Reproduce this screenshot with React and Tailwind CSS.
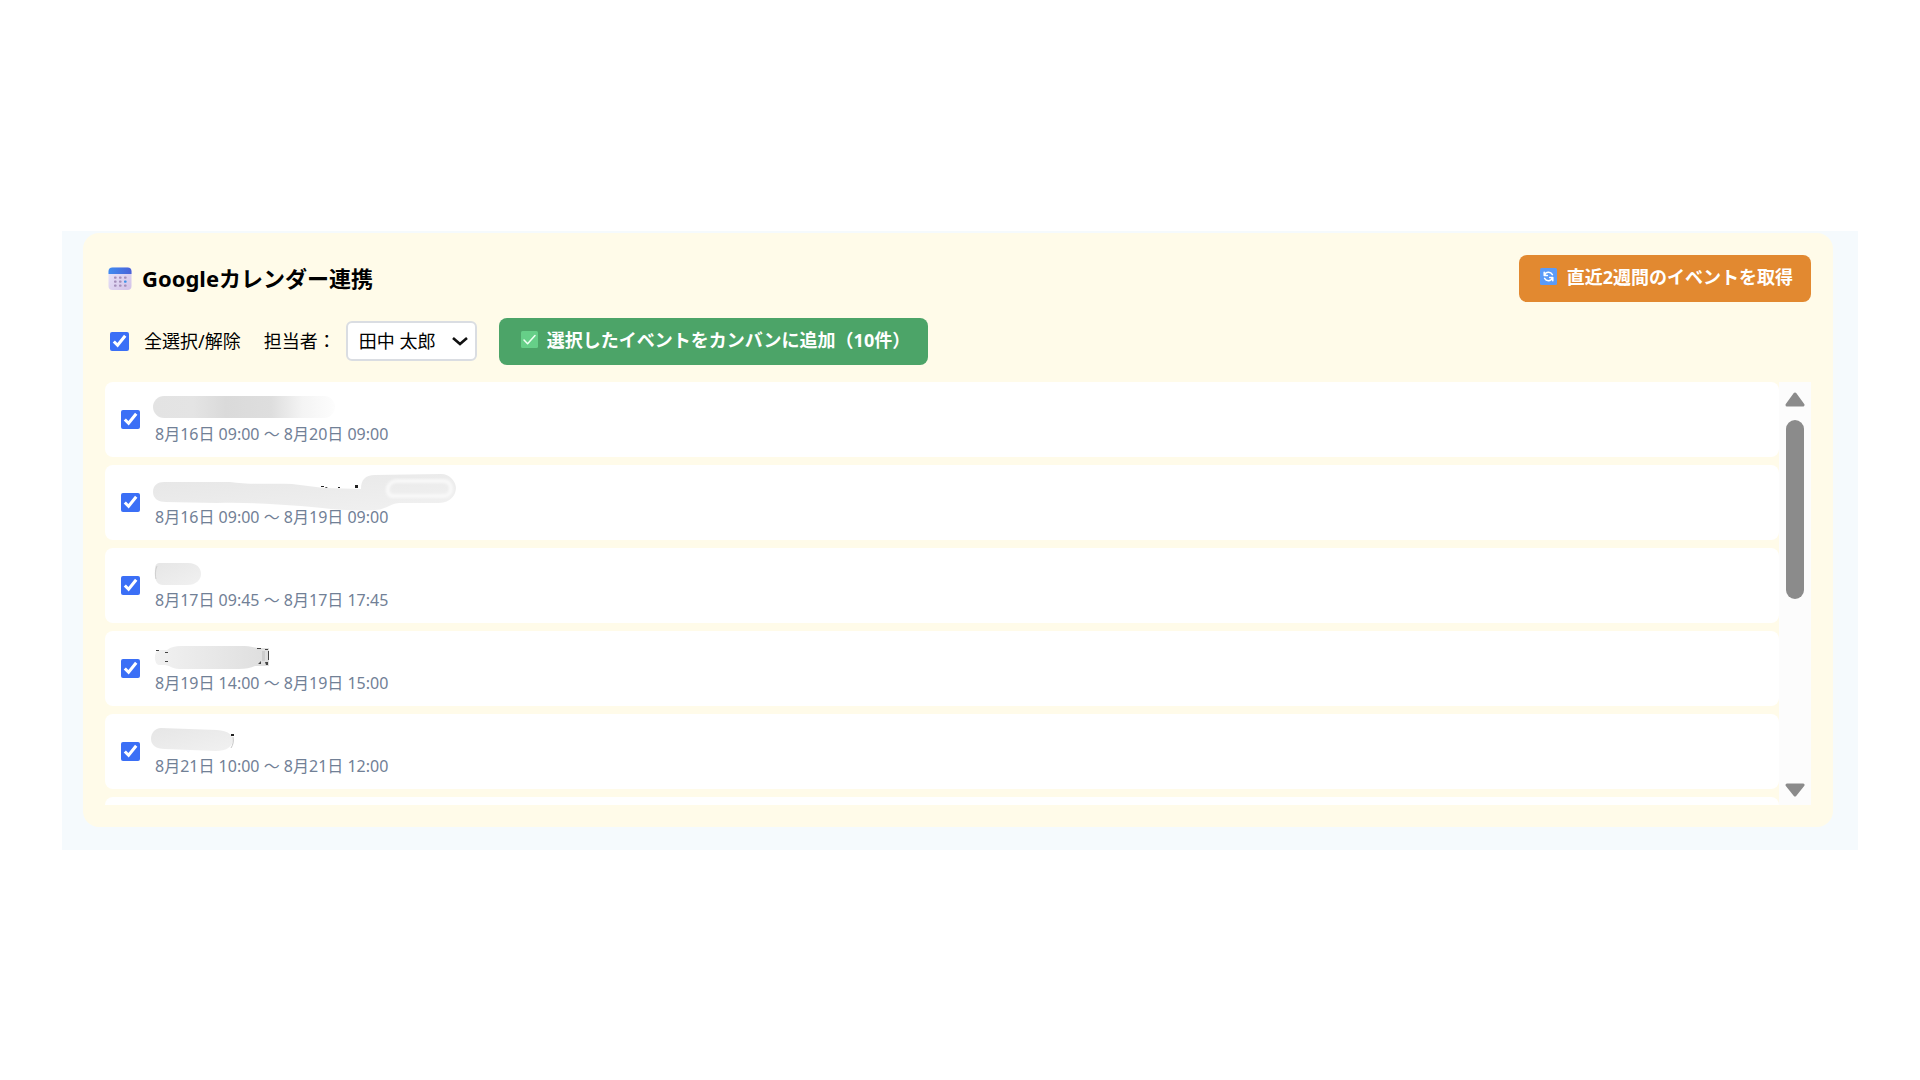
import React, { useState } from 'react'

const PEOPLE = ['田中 太郎']

const EVENTS = [
  { id: 1, time: '8月16日 09:00 ～ 8月20日 09:00', mask: 'fade' },
  { id: 2, time: '8月16日 09:00 ～ 8月19日 09:00', mask: 'long' },
  { id: 3, time: '8月17日 09:45 ～ 8月17日 17:45', mask: 'short' },
  { id: 4, time: '8月19日 14:00 ～ 8月19日 15:00', mask: 'medium' },
  { id: 5, time: '8月21日 10:00 ～ 8月21日 12:00', mask: 'small' },
]

function CalendarIcon() {
  return (
    <svg className="h-6 w-6 shrink-0" viewBox="0 0 24 24" aria-hidden="true">
      <defs>
        <linearGradient id="cal-top" x1="0" y1="0" x2="1" y2="0">
          <stop offset="0" stopColor="#3f8cf0" />
          <stop offset="1" stopColor="#4a62d8" />
        </linearGradient>
        <linearGradient id="cal-body" x1="0" y1="0" x2="1" y2="1">
          <stop offset="0" stopColor="#e9e6fa" />
          <stop offset="1" stopColor="#d3c2e8" />
        </linearGradient>
      </defs>
      <rect x="0.5" y="1.5" width="23" height="22.5" rx="4" fill="url(#cal-body)" />
      <path d="M0.5 8V5.5a4 4 0 0 1 4-4h15a4 4 0 0 1 4 4V8z" fill="url(#cal-top)" />
      {[10.5, 14.5, 18.5].map((y) =>
        [6, 11, 16].map((x) => (
          <rect key={`${x}-${y}`} x={x} y={y} width="2.6" height="2.2" rx="0.8" fill={x === 16 && y === 14.5 ? '#3f93e8' : '#a58fba'} />
        ))
      )}
    </svg>
  )
}

function RefreshIcon() {
  return (
    <svg className="h-[17px] w-[17px] shrink-0" viewBox="0 0 17 17" aria-hidden="true">
      <rect width="17" height="17" rx="1.5" fill="#5b9bf8" />
      <g fill="none" stroke="#fff" strokeWidth="1.5" strokeLinecap="round" strokeLinejoin="round">
        <path d="M4.2 4.2v3.2h3.2M4.6 7C6 3.6 10.6 3.4 12.4 6.6" />
        <path d="M12.8 12.8V9.6H9.6M12.4 10c-1.4 3.4-6 3.6-7.8.4" />
      </g>
    </svg>
  )
}

function CheckIcon() {
  return (
    <svg className="h-[17px] w-[17px] shrink-0" viewBox="0 0 17 17" aria-hidden="true">
      <rect width="17" height="17" rx="1.5" fill="#66cf88" />
      <path d="M3 9l3.6 3.8L14 4.6" fill="none" stroke="#f0fff4" strokeWidth="1.5" strokeLinecap="round" strokeLinejoin="round" />
    </svg>
  )
}

// Brushed-out event titles
function TitleMask({ type }) {
  return (
    <svg className="-ml-1 block h-6 w-80 overflow-visible" viewBox="0 0 320 24" aria-hidden="true">
      <defs>
        <linearGradient id="mask-fade" x1="0" y1="0" x2="1" y2="0">
          <stop offset="0" stopColor="#e3e3e3" />
          <stop offset="0.22" stopColor="#e4e4e4" />
          <stop offset="0.4" stopColor="#dadada" />
          <stop offset="0.65" stopColor="#dedede" />
          <stop offset="0.82" stopColor="#f4f4f4" />
          <stop offset="1" stopColor="#fdfdfd" />
        </linearGradient>
        <linearGradient id="mask-soft" x1="0" y1="0" x2="1" y2="1">
          <stop offset="0" stopColor="#e6e6e6" />
          <stop offset="1" stopColor="#f1f1f1" />
        </linearGradient>
        <linearGradient id="mask-mid" x1="0" y1="0" x2="1" y2="0">
          <stop offset="0" stopColor="#f1f1f1" />
          <stop offset="0.6" stopColor="#e6e6e6" />
          <stop offset="1" stopColor="#dedede" />
        </linearGradient>
        <filter id="mask-blur" x="-10%" y="-20%" width="120%" height="140%">
          <feGaussianBlur stdDeviation="1.2" />
        </filter>
      </defs>
      {type === 'fade' && <rect x="2" y="2" width="182" height="22" rx="11" fill="url(#mask-fade)" />}
      {type === 'long' && (
        <g>
          <path d="M13 5h66c18 3 40 1 62 2l32 4 37 1c0-9 4-14 14-14l66-1c9 0 15 8 15 14s-5 15-17 15h-40c-10 1-14 7-24 7-26 2-50-2-74-4-28-2-58-4-84-3l-51-1C8 25 2 22 2 15S7 5 13 5z" fill="url(#mask-soft)" />
          <path d="M246 4h46c6 0 8 4 8 8s-3 7-8 7h-50c-8 0-7-15 4-15z" fill="none" stroke="#f8f8f8" strokeWidth="4" filter="url(#mask-blur)" />
          <path d="M170 9h3v1h-3zM175 10l2 1h-3zM187 10h2v1h-2zM204 8h3v3h-3z" fill="#222" />
        </g>
      )}
      {type === 'short' && (
        <g>
          <path d="M8 3h29c9 0 13 5 13 11s-5 11-14 11H12C7 25 4 21 4 15S3 4 8 3z" fill="url(#mask-soft)" />
          <path d="M6 6c-2 4-2 10-1 13" fill="none" stroke="#cfcfcf" strokeWidth="1" />
        </g>
      )}
      {type === 'medium' && (
        <g>
          <path d="M8 7h8c4-3 8-4 14-4h64c6 0 10 2 14 2h10v18h-14c-4 2-10 3-16 3H28c-6 0-8-3-14-4H8C3 21 2 9 8 7z" fill="url(#mask-mid)" />
          <path d="M5 7h3v1H5zM14 9h3v1h-3zM14 18h3v1h-3zM106 5h4v1h-4zM114 6h3v1h-3zM117 8h1v9h-1zM107 21l3-3v3h-3zM114 19h3v3h-2z" fill="#444" />
          <path d="M111 8h3v10h-3z" fill="#cdcdcd" />
        </g>
      )}
      {type === 'small' && (
        <g>
          <path d="M10 2l56 2c11 1 17 5 16 11s-7 10-17 10l-51-2C5 23 0 19 0 13S4 2 10 2z" fill="url(#mask-soft)" />
          <path d="M80 8h3v2h-3z" fill="#222" />
          <path d="M82 11c1 4 0 8-2 11" fill="none" stroke="#c8c8c8" strokeWidth="1" />
        </g>
      )}
    </svg>
  )
}

function EventRow({ event, checked, onToggle }) {
  return (
    <label className="flex items-center gap-[15px] rounded-lg bg-white px-4 pt-3 pb-[11px]">
      <input
        type="checkbox"
        checked={checked}
        onChange={onToggle}
        className="h-[19px] w-[19px] shrink-0 accent-[#3b6ff6]"
      />
      <span className="flex flex-col gap-1">
        <TitleMask type={event.mask} />
        <span className="text-base leading-6 text-[#718096]">{event.time}</span>
      </span>
    </label>
  )
}

function ScrollBar() {
  return (
    <div className="flex w-8 shrink-0 flex-col items-center bg-[#fcfcfc] pt-2 pb-[6px]" aria-hidden="true">
      <svg className="h-[18px] w-5" viewBox="0 0 20 18">
        <path d="M10 4L18 15H2z" fill="#8b8b8b" stroke="#8b8b8b" strokeWidth="3" strokeLinejoin="round" />
      </svg>
      <div className="mt-3 h-[179px] w-[18px] rounded-full bg-[#8b8b8b]" />
      <svg className="mt-auto h-[18px] w-5" viewBox="0 0 20 18">
        <path d="M10 14L18 4H2z" fill="#8b8b8b" stroke="#8b8b8b" strokeWidth="3" strokeLinejoin="round" />
      </svg>
    </div>
  )
}

export default function App() {
  const [selected, setSelected] = useState(EVENTS.map((e) => e.id))
  const [person, setPerson] = useState(PEOPLE[0])

  const allSelected = selected.length === EVENTS.length

  const toggle = (id) => {
    setSelected(selected.includes(id) ? selected.filter((s) => s !== id) : [...selected, id])
  }

  return (
    <div className="flex min-h-screen items-center bg-white px-[62px] font-['Noto_Sans','Noto_Sans_CJK_JP',sans-serif] text-black">
      <main className="flex-1 bg-[#f5fafd] pt-[2px] pr-[25px] pb-[23px] pl-[21px]">
        <section className="rounded-2xl bg-[#fffbe9] p-[22px]">
          <div className="flex items-center justify-between">
            <h2 className="flex items-center gap-[10px] pl-[3px] text-[22px] leading-8 font-bold">
              <CalendarIcon />
              Googleカレンダー連携
            </h2>
            <button className="flex items-center gap-[10px] rounded-lg bg-[#e28930] pt-[9px] pr-[18px] pb-3 pl-[21px] text-lg leading-[26px] font-bold text-white">
              <RefreshIcon />
              直近2週間のイベントを取得
            </button>
          </div>

          <div className="mt-4 flex items-center text-lg">
            <label className="flex items-center gap-[15px] pl-[5px]">
              <input
                type="checkbox"
                checked={allSelected}
                onChange={() => setSelected(allSelected ? [] : EVENTS.map((e) => e.id))}
                className="h-[19px] w-[19px] accent-[#3b6ff6]"
              />
              全選択/解除
            </label>
            <label htmlFor="assignee" className="ml-[23px]">担当者：</label>
            <div className="relative ml-[10px]">
              <select
                id="assignee"
                value={person}
                onChange={(e) => setPerson(e.target.value)}
                className="h-10 appearance-none rounded-md border-2 border-[#dadde2] bg-white pr-[39px] pl-[11px]"
              >
                {PEOPLE.map((p) => (
                  <option key={p}>{p}</option>
                ))}
              </select>
              <svg className="pointer-events-none absolute top-3 right-2 h-4 w-[18px]" viewBox="0 0 18 16" aria-hidden="true">
                <path d="M2 5l7 6 7-6" fill="none" stroke="#111" strokeWidth="2.6" />
              </svg>
            </div>
            <button className="ml-[22px] flex items-center gap-[9px] rounded-lg bg-[#4ca468] pt-[9px] pr-[18px] pb-3 pl-[22px] leading-[26px] font-bold text-white">
              <CheckIcon />
              選択したイベントをカンバンに追加（10件）
            </button>
          </div>

          <div className="mt-[17px] flex max-h-[423px] overflow-hidden">
            <div className="flex flex-1 flex-col gap-2">
              {EVENTS.map((event) => (
                <EventRow
                  key={event.id}
                  event={event}
                  checked={selected.includes(event.id)}
                  onToggle={() => toggle(event.id)}
                />
              ))}
              <div className="h-3 shrink-0 rounded-t-lg bg-white" />
            </div>
            <ScrollBar />
          </div>
        </section>
      </main>
    </div>
  )
}
